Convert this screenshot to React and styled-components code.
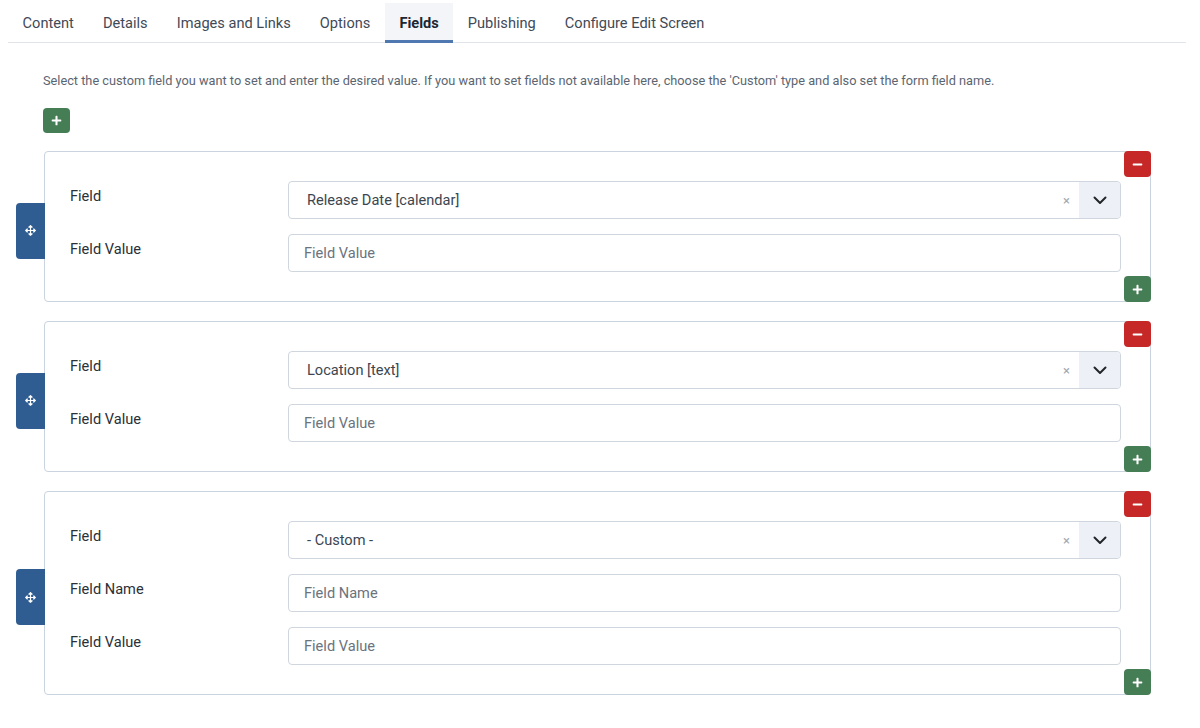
import React from "react";
import styled, { createGlobalStyle } from "styled-components";
import { FaPlus, FaMinus, FaArrowsAlt } from "react-icons/fa";

const Global = createGlobalStyle`
  html, body { margin: 0; padding: 0; background: #fff; }
  body { font-family: Roboto, "Noto Sans", "Liberation Sans", sans-serif; color: #22262a; }
  * { box-sizing: border-box; }
`;

const Page = styled.div`
  width: 1200px;
  min-height: 728px;
`;

const TabBar = styled.nav`
  display: flex;
  margin: 0 14px 0 8px;
  border-bottom: 1px solid #e1e5ea;
  height: 43px;
`;

const Tab = styled.div`
  display: flex;
  align-items: center;
  padding: 2px 14.5px 0 14.6px;
  margin-top: 3px;
  height: 40px;
  font-size: 14.6px;
  color: ${p => (p.$active ? "#1c2733" : "#3f4a57")};
  font-weight: ${p => (p.$active ? 700 : 400)};
  background: ${p => (p.$active ? "#f3f5f8" : "transparent")};
  border-bottom: 3px solid ${p => (p.$active ? "#4f78b0" : "transparent")};
  margin-bottom: -1px;
`;

const Main = styled.div`
  padding: 29px 49px 20px 43px;
`;

const Description = styled.p`
  margin: 0;
  font-size: 12.75px;
  line-height: 18px;
  color: #5b6571;
`;

const ActionButton = styled.button`
  display: flex;
  align-items: center;
  justify-content: center;
  width: ${p => p.$w || 26}px;
  height: ${p => p.$h || 26}px;
  border: 0;
  padding: 0;
  border-radius: 4px;
  color: #fff;
  background: ${p => (p.$variant === "danger" ? "#c52827" : "#457d54")};
  cursor: pointer;
`;

const AddRow = styled.div`
  margin-top: 18px;
  margin-bottom: 18px;
`;

const Cards = styled.div`
  display: flex;
  flex-direction: column;
  gap: 19px;
  margin-left: 1px;
`;

const Card = styled.div`
  position: relative;
  border: 1px solid #cad4df;
  border-radius: 4px;
  padding: 29px 29px 29px 25px;
  display: flex;
  flex-direction: column;
  gap: 15px;
`;

const Handle = styled.div`
  position: absolute;
  left: -29px;
  top: calc(50% - 24px);
  width: 29px;
  height: 56px;
  background: #2f5d91;
  border-radius: 4px 0 0 4px;
  display: flex;
  align-items: center;
  justify-content: center;
  color: #fff;
`;

const CornerButtons = styled.div`
  position: absolute;
  top: -1px;
  right: -1px;
  bottom: -1px;
  display: flex;
  flex-direction: column;
  justify-content: space-between;
`;

const Row = styled.div`
  display: grid;
  grid-template-columns: 218px 1fr;
  align-items: start;
`;

const Label = styled.label`
  font-size: 14.6px;
  line-height: 20px;
  padding-top: 5px;
  color: #2a3038;
`;

const Input = styled.div`
  height: 38px;
  border: 1px solid #cfd6de;
  border-radius: 4px;
  display: flex;
  align-items: center;
  padding-left: 15px;
  font-size: 14.6px;
  color: #6b737c;
  background: #fff;
`;

const Select = styled.div`
  height: 38px;
  border: 1px solid #cfd6de;
  border-radius: 4px;
  display: flex;
  align-items: stretch;
  font-size: 14.6px;
  color: #3c4650;
  background: #fff;
  overflow: hidden;
`;

const SelectValue = styled.div`
  flex: 1;
  display: flex;
  align-items: center;
  padding-left: 18px;
`;

const Clear = styled.span`
  display: flex;
  align-items: center;
  padding: 0 9px;
  font-size: 13px;
  color: #a2a8ae;
`;

const Chevron = styled.div`
  width: 41px;
  background: #edf1f7;
  display: flex;
  align-items: center;
  justify-content: center;
`;

const tabs = ["Content", "Details", "Images and Links", "Options", "Fields", "Publishing", "Configure Edit Screen"];

const cards = [
  { field: "Release Date [calendar]", rows: ["Field Value"] },
  { field: "Location [text]", rows: ["Field Value"] },
  { field: "- Custom -", rows: ["Field Name", "Field Value"] },
];

function FieldCard({ field, rows }) {
  return (
    <Card>
      <Handle>
        <FaArrowsAlt size={11} />
      </Handle>
      <CornerButtons>
        <ActionButton $variant="danger" $w={27} $h={26}>
          <FaMinus size={11} />
        </ActionButton>
        <ActionButton $w={27} $h={26}>
          <FaPlus size={11} />
        </ActionButton>
      </CornerButtons>
      <Row>
        <Label>Field</Label>
        <Select>
          <SelectValue>{field}</SelectValue>
          <Clear>×</Clear>
          <Chevron>
            <svg width="14" height="9" viewBox="0 0 14 9">
              <path d="M1.5 1.5 L7 7 L12.5 1.5" fill="none" stroke="#22262a" strokeWidth="2" strokeLinecap="round" strokeLinejoin="round" />
            </svg>
          </Chevron>
        </Select>
      </Row>
      {rows.map(r => (
        <Row key={r}>
          <Label>{r}</Label>
          <Input>{r}</Input>
        </Row>
      ))}
    </Card>
  );
}

export default function App() {
  return (
    <Page>
      <Global />
      <TabBar>
        {tabs.map(t => (
          <Tab key={t} $active={t === "Fields"}>{t}</Tab>
        ))}
      </TabBar>
      <Main>
        <Description>
          Select the custom field you want to set and enter the desired value. If you want to set fields not available here, choose the 'Custom' type and also set the form field name.
        </Description>
        <AddRow>
          <ActionButton $w={27} $h={25}>
            <FaPlus size={11} />
          </ActionButton>
        </AddRow>
        <Cards>
          {cards.map((c, i) => (
            <FieldCard key={i} {...c} />
          ))}
        </Cards>
      </Main>
    </Page>
  );
}
